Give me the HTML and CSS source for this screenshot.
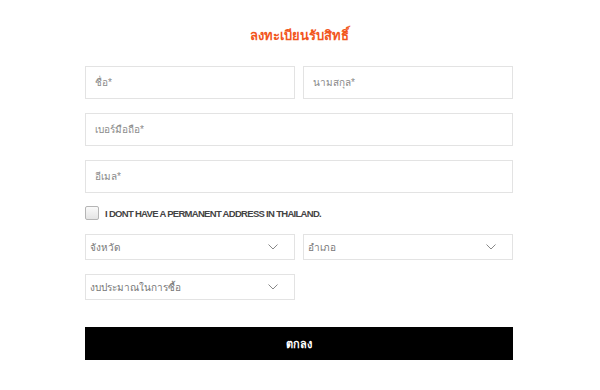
FILE: index.html
```html
<!DOCTYPE html>
<html lang="th">
<head>
  <meta charset="utf-8"/>
  <meta name="viewport" content="width=device-width, initial-scale=1.0"/>
  <title>ลงทะเบียนรับสิทธิ์</title>
  <link rel="stylesheet" href="styles.css">
</head>
<body>
  <form class="register">
    <h2 class="register-title">ลงทะเบียนรับสิทธิ์</h2>

    <div class="row two">
      <input type="text" placeholder="ชื่อ*"/>
      <input type="text" placeholder="นามสกุล*"/>
    </div>
    <div class="row">
      <input type="text" placeholder="เบอร์มือถือ*"/>
    </div>
    <div class="row">
      <input type="text" placeholder="อีเมล*"/>
    </div>

    <label class="check">
      <span class="box"></span>
      I DONT HAVE A PERMANENT ADDRESS IN THAILAND.
    </label>

    <div class="row two sel-row">
      <div class="select">จังหวัด<svg class="chev" width="10" height="6" viewBox="0 0 10 6"><polyline points="0.5,0.5 5,5 9.5,0.5" fill="none" stroke="#888" stroke-width="1"/></svg></div>
      <div class="select">อำเภอ<svg class="chev" width="10" height="6" viewBox="0 0 10 6"><polyline points="0.5,0.5 5,5 9.5,0.5" fill="none" stroke="#888" stroke-width="1"/></svg></div>
    </div>
    <div class="row two sel-row">
      <div class="select">งบประมาณในการซื้อ<svg class="chev" width="10" height="6" viewBox="0 0 10 6"><polyline points="0.5,0.5 5,5 9.5,0.5" fill="none" stroke="#888" stroke-width="1"/></svg></div>
    </div>

    <button type="button" class="submit">ตกลง</button>
  </form>
</body>
</html>
```

FILE: styles.css
```css
body { margin:0; background:#fff; font-family:"Liberation Sans", "Noto Sans", "DejaVu Sans", sans-serif; }

.register { width:428px; margin:0 auto 0 85px; padding-top:25px; }
.register-title { margin:0 0 19px; text-align:center; color:#f2561d; font-size:13px; font-weight:bold; line-height:22px; }

.row { display:grid; grid-template-columns:1fr; gap:8px; margin-bottom:14px; }
.row.two { grid-template-columns:1fr 1fr; }

input { box-sizing:border-box; height:33px; width:100%; border:1px solid #e3e3e3; padding:0 9px; font-family:inherit; font-size:10px; color:#333; outline:none; }
input::placeholder { color:#8a8a8a; }

.check { display:flex; align-items:center; gap:6px; margin:-1px 0 14px; font-weight:bold; font-size:9.5px; letter-spacing:-0.7px; color:#444; }
.check .box { width:12px; height:12px; border:1px solid #b5b5b5; border-radius:2px; background:linear-gradient(#fafafa, #e4e4e4); }

.sel-row { margin-bottom:14px; }
.select { box-sizing:border-box; height:26px; border:1px solid #e3e3e3; padding:0 4px; display:flex; align-items:center; justify-content:space-between; font-size:10px; color:#777; }
.chev { margin-right:12px; }

.submit { display:block; width:100%; height:33px; margin-top:27px; border:none; background:#000; color:#fff; font-family:inherit; font-size:11px; font-weight:bold; cursor:pointer; }
```
